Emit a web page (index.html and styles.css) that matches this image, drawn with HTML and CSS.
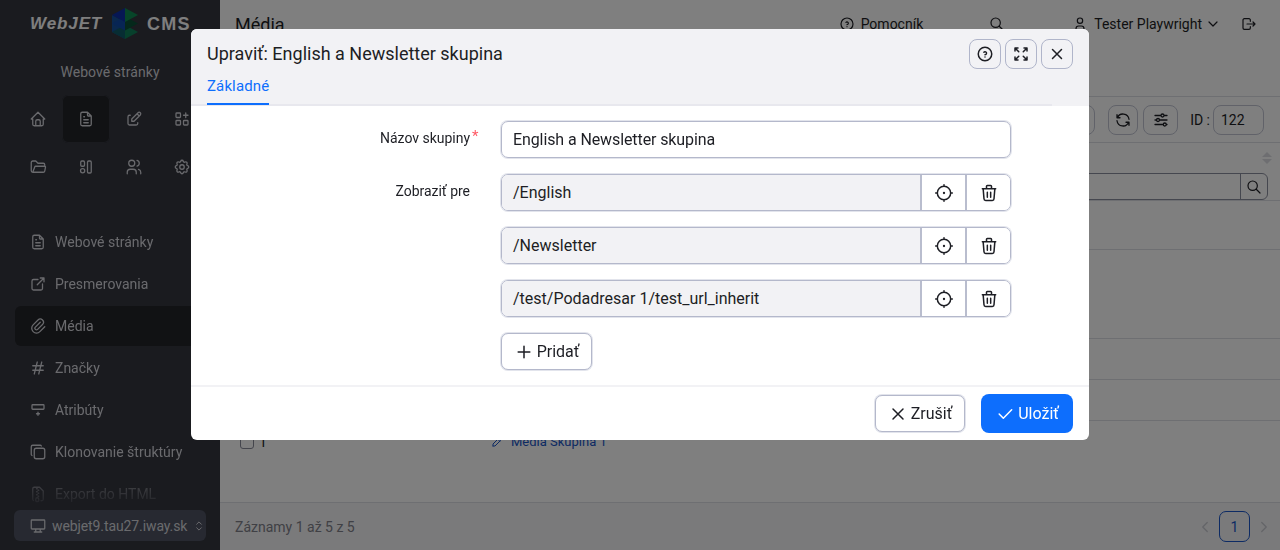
FILE: index.html
```html
<!DOCTYPE html>
<html lang="sk">
<head>
<meta charset="utf-8">
<title>Média</title>
<link rel="stylesheet" href="styles.css">
</head>
<body>
<svg class="sprite" xmlns="http://www.w3.org/2000/svg">
<symbol id="i-home" viewBox="0 0 24 24"><path d="M5 12l-2 0l9 -9l9 9l-2 0M5 12v7a2 2 0 0 0 2 2h10a2 2 0 0 0 2 -2v-7M9 21v-6a2 2 0 0 1 2 -2h2a2 2 0 0 1 2 2v6"/></symbol>
<symbol id="i-file" viewBox="0 0 24 24"><path d="M14 3v4a1 1 0 0 0 1 1h4M17 21h-10a2 2 0 0 1 -2 -2v-14a2 2 0 0 1 2 -2h7l5 5v11a2 2 0 0 1 -2 2zM9 9l1 0M9 13l6 0M9 17l6 0"/></symbol>
<symbol id="i-edit" viewBox="0 0 24 24"><path d="M7 7h-1a2 2 0 0 0 -2 2v9a2 2 0 0 0 2 2h9a2 2 0 0 0 2 -2v-1M20.385 6.585a2.1 2.1 0 0 0 -2.97 -2.97l-8.415 8.385v3h3l8.385 -8.415zM16 5l3 3"/></symbol>
<symbol id="i-apps" viewBox="0 0 24 24"><path d="M4 5a1 1 0 0 1 1 -1h4a1 1 0 0 1 1 1v4a1 1 0 0 1 -1 1h-4a1 1 0 0 1 -1 -1zM4 15a1 1 0 0 1 1 -1h4a1 1 0 0 1 1 1v4a1 1 0 0 1 -1 1h-4a1 1 0 0 1 -1 -1zM14 15a1 1 0 0 1 1 -1h4a1 1 0 0 1 1 1v4a1 1 0 0 1 -1 1h-4a1 1 0 0 1 -1 -1zM14 7l6 0M17 4l0 6"/></symbol>
<symbol id="i-folder" viewBox="0 0 24 24"><path d="M5 19l2.757 -7.351a1 1 0 0 1 .936 -.649h12.307a1 1 0 0 1 .986 1.164l-.996 5.211a2 2 0 0 1 -1.964 1.625h-14.026a2 2 0 0 1 -2 -2v-11a2 2 0 0 1 2 -2h4l3 3h7a2 2 0 0 1 2 2v2"/></symbol>
<symbol id="i-layout" viewBox="0 0 24 24"><rect x="5" y="4" width="5" height="7" rx="1.5"/><circle cx="7.500" cy="17" r="2.800"/><rect x="14" y="4" width="5" height="16" rx="1.5"/></symbol>
<symbol id="i-users" viewBox="0 0 24 24"><path d="M5 7a4 4 0 1 0 8 0a4 4 0 1 0 -8 0M3 21v-2a4 4 0 0 1 4 -4h4a4 4 0 0 1 4 4v2M16 3.13a4 4 0 0 1 0 7.75M21 21v-2a4 4 0 0 0 -3 -3.85"/></symbol>
<symbol id="i-settings" viewBox="0 0 24 24"><path d="M10.325 4.317c.426 -1.756 2.924 -1.756 3.35 0a1.724 1.724 0 0 0 2.573 1.066c1.543 -.94 3.31 .826 2.37 2.37a1.724 1.724 0 0 0 1.065 2.572c1.756 .426 1.756 2.924 0 3.35a1.724 1.724 0 0 0 -1.066 2.573c.94 1.543 -.826 3.31 -2.37 2.37a1.724 1.724 0 0 0 -2.572 1.065c-.426 1.756 -2.924 1.756 -3.35 0a1.724 1.724 0 0 0 -2.573 -1.066c-1.543 .94 -3.31 -.826 -2.37 -2.37a1.724 1.724 0 0 0 -1.065 -2.572c-1.756 -.426 -1.756 -2.924 0 -3.35a1.724 1.724 0 0 0 1.066 -2.573c-.94 -1.543 .826 -3.31 2.37 -2.37c1 .608 2.296 .07 2.572 -1.065zM9 12a3 3 0 1 0 6 0a3 3 0 0 0 -6 0"/></symbol>
<symbol id="i-external" viewBox="0 0 24 24"><path d="M12 6h-6a2 2 0 0 0 -2 2v10a2 2 0 0 0 2 2h10a2 2 0 0 0 2 -2v-6M11 13l9 -9M15 4h5v5"/></symbol>
<symbol id="i-clip" viewBox="0 0 24 24"><path d="M15 7l-6.5 6.5a1.5 1.5 0 0 0 3 3l6.5 -6.5a3 3 0 0 0 -6 -6l-6.5 6.5a4.5 4.5 0 0 0 9 9l6.5 -6.5"/></symbol>
<symbol id="i-hash" viewBox="0 0 24 24"><path d="M5 9l14 0M5 15l14 0M11 4l-4 16M17 4l-4 16"/></symbol>
<symbol id="i-row" viewBox="0 0 24 24"><path d="M20 6v4a1 1 0 0 1 -1 1h-14a1 1 0 0 1 -1 -1v-4a1 1 0 0 1 1 -1h14a1 1 0 0 1 1 1zM12 15l0 4M14 17l-4 0"/></symbol>
<symbol id="i-copy" viewBox="0 0 24 24"><path d="M7 9.667a2.667 2.667 0 0 1 2.667 -2.667h8.666a2.667 2.667 0 0 1 2.667 2.667v8.666a2.667 2.667 0 0 1 -2.667 2.667h-8.666a2.667 2.667 0 0 1 -2.667 -2.667zM4.012 16.737a2.005 2.005 0 0 1 -1.012 -1.737v-10c0 -1.1 .9 -2 2 -2h10c.75 0 1.158 .385 1.5 1"/></symbol>
<symbol id="i-zip" viewBox="0 0 24 24"><path d="M6 20.735a2 2 0 0 1 -1 -1.735v-14a2 2 0 0 1 2 -2h7l5 5v11a2 2 0 0 1 -2 2h-1M11 17a2 2 0 0 1 2 2v2a1 1 0 0 1 -1 1h-2a1 1 0 0 1 -1 -1v-2a2 2 0 0 1 2 -2zM11 5l-1 0M13 7l-1 0M11 9l-1 0M13 11l-1 0M11 13l-1 0M13 15l-1 0"/></symbol>
<symbol id="i-desktop" viewBox="0 0 24 24"><path d="M3 5a1 1 0 0 1 1 -1h16a1 1 0 0 1 1 1v10a1 1 0 0 1 -1 1h-16a1 1 0 0 1 -1 -1v-10zM7 20h10M9 16v4M15 16v4"/></symbol>
<symbol id="i-selector" viewBox="0 0 24 24"><path d="M8 9l4 -4l4 4M16 15l-4 4l-4 -4"/></symbol>
<symbol id="i-help" viewBox="0 0 24 24"><path d="M3 12a9 9 0 1 0 18 0a9 9 0 1 0 -18 0M12 16v.01M12 13a2 2 0 0 0 .914 -3.782a1.98 1.98 0 0 0 -2.414 .483"/></symbol>
<symbol id="i-search" viewBox="0 0 24 24"><path d="M3 10a7 7 0 1 0 14 0a7 7 0 1 0 -14 0M21 21l-6 -6"/></symbol>
<symbol id="i-user" viewBox="0 0 24 24"><path d="M8 7a4 4 0 1 0 8 0a4 4 0 0 0 -8 0M6 21v-2a4 4 0 0 1 4 -4h4a4 4 0 0 1 4 4v2"/></symbol>
<symbol id="i-down" viewBox="0 0 24 24"><path d="M6 9l6 6l6 -6"/></symbol>
<symbol id="i-left" viewBox="0 0 24 24"><path d="M15 6l-6 6l6 6"/></symbol>
<symbol id="i-right" viewBox="0 0 24 24"><path d="M9 6l6 6l-6 6"/></symbol>
<symbol id="i-logout" viewBox="0 0 24 24"><path d="M14 8v-2a2 2 0 0 0 -2 -2h-7a2 2 0 0 0 -2 2v12a2 2 0 0 0 2 2h7a2 2 0 0 0 2 -2v-2M9 12h12l-3 -3M18 15l3 -3"/></symbol>
<symbol id="i-max" viewBox="0 0 24 24"><path d="M16 4l4 0l0 4M15 9l5 -5M8 20l-4 0l0 -4M4 20l5 -5M16 20l4 0l0 -4M15 15l5 5M8 4l-4 0l0 4M4 4l5 5"/></symbol>
<symbol id="i-x" viewBox="0 0 24 24"><path d="M18 6l-12 12M6 6l12 12"/></symbol>
<symbol id="i-target" viewBox="0 0 24 24"><path d="M11.5 12a.5 .5 0 1 0 1 0a.5 .5 0 1 0 -1 0M4 12a8 8 0 1 0 16 0a8 8 0 1 0 -16 0M12 2l0 2M12 20l0 2M20 12l2 0M2 12l2 0"/></symbol>
<symbol id="i-trash" viewBox="0 0 24 24"><path d="M4 7l16 0M10 11l0 6M14 11l0 6M5 7l1 12a2 2 0 0 0 2 2h8a2 2 0 0 0 2 -2l1 -12M9 7v-3a1 1 0 0 1 1 -1h4a1 1 0 0 1 1 1v3"/></symbol>
<symbol id="i-plus" viewBox="0 0 24 24"><path d="M12 5l0 14M5 12l14 0"/></symbol>
<symbol id="i-check" viewBox="0 0 24 24"><path d="M5 12l5 5l10 -10"/></symbol>
<symbol id="i-refresh" viewBox="0 0 24 24"><path d="M20 11a8.1 8.1 0 0 0 -15.5 -2m-.5 -4v4h4M4 13a8.1 8.1 0 0 0 15.5 2m.5 4v-4h-4"/></symbol>
<symbol id="i-adjust" viewBox="0 0 24 24"><path d="M12 6a2 2 0 1 0 4 0a2 2 0 1 0 -4 0M4 6l8 0M16 6l4 0M6 12a2 2 0 1 0 4 0a2 2 0 1 0 -4 0M4 12l2 0M10 12l10 0M15 18a2 2 0 1 0 4 0a2 2 0 1 0 -4 0M4 18l11 0M19 18l1 0"/></symbol>
<symbol id="i-pencil" viewBox="0 0 24 24"><path d="M4 20h4l10.5 -10.5a2.828 2.828 0 1 0 -4 -4l-10.5 10.5v4M13.5 6.5l4 4"/></symbol>
</svg>

<div class="app">
  <aside class="sidebar">
    <div class="logo">
      <span class="logo-web">WebJET</span>
      <svg class="logo-mark" viewBox="0 0 28 32">
        <polygon class="m-col" points="1,7 14,14 14,31 1,24"/>
        <polygon class="m-bl" points="1,24 14,17 14,31"/>
        <polygon class="m-br" points="27,24 14,17 14,31"/>
        <polygon class="m-ml" points="1,15.500 14,8.500 14,22.500"/>
        <polygon class="m-mr" points="27,15.500 14,8.500 14,22.500"/>
        <polygon class="m-tl" points="1,7 14,0 14,14"/>
        <polygon class="m-tr" points="27,7 14,0 14,14"/>
      </svg>
      <span class="logo-cms">CMS</span>
    </div>
    <div class="section-title">Webové stránky</div>
    <div class="module-grid">
      <a class="module"><svg class="ico"><use href="#i-home"/></svg></a>
      <a class="module module-active"><svg class="ico"><use href="#i-file"/></svg></a>
      <a class="module"><svg class="ico"><use href="#i-edit"/></svg></a>
      <a class="module"><svg class="ico"><use href="#i-apps"/></svg></a>
      <a class="module"><svg class="ico"><use href="#i-folder"/></svg></a>
      <a class="module"><svg class="ico"><use href="#i-layout"/></svg></a>
      <a class="module"><svg class="ico"><use href="#i-users"/></svg></a>
      <a class="module"><svg class="ico"><use href="#i-settings"/></svg></a>
    </div>
    <nav class="nav">
      <a class="nav-item"><svg class="ico"><use href="#i-file"/></svg>Webové stránky</a>
      <a class="nav-item"><svg class="ico"><use href="#i-external"/></svg>Presmerovania</a>
      <a class="nav-item nav-active"><svg class="ico"><use href="#i-clip"/></svg>Média</a>
      <a class="nav-item"><svg class="ico"><use href="#i-hash"/></svg>Značky</a>
      <a class="nav-item"><svg class="ico"><use href="#i-row"/></svg>Atribúty</a>
      <a class="nav-item"><svg class="ico"><use href="#i-copy"/></svg>Klonovanie štruktúry</a>
      <a class="nav-item"><svg class="ico"><use href="#i-zip"/></svg>Export do HTML</a>
    </nav>
    <div class="site-select">
      <svg class="ico"><use href="#i-desktop"/></svg>
      <span class="site-name">webjet9.tau27.iway.sk</span>
      <svg class="ico-sm"><use href="#i-selector"/></svg>
    </div>
  </aside>

  <main class="main">
    <header class="topbar">
      <h1 class="page-title">Média</h1>
      <a class="top-link top-help"><svg class="ico-top"><use href="#i-help"/></svg>Pomocník</a>
      <a class="top-link top-search"><svg class="ico-top"><use href="#i-search"/></svg></a>
      <a class="top-link top-user"><svg class="ico-top"><use href="#i-user"/></svg>Tester Playwright<svg class="ico-top top-caret"><use href="#i-down"/></svg></a>
      <a class="top-link top-out"><svg class="ico-top"><use href="#i-logout"/></svg></a>
    </header>
    <div class="toolbar">
      <span class="tool-btn tool-wide"></span>
      <span class="tool-btn tool-refresh"><svg class="ico"><use href="#i-refresh"/></svg></span>
      <span class="tool-btn tool-adjust"><svg class="ico"><use href="#i-adjust"/></svg></span>
      <label class="id-label">ID :</label>
      <span class="id-input">122</span>
    </div>
    <div class="thead">
      <div class="sort"><span class="sort-up"></span><span class="sort-down"></span></div>
      <div class="filter"><span class="filter-btn"><svg class="ico-top"><use href="#i-search"/></svg></span></div>
    </div>
    <div class="row row-a"></div>
    <div class="row row-b"></div>
    <div class="row row-c"></div>
    <div class="row row-c"></div>
    <div class="row row-last">
      <span class="cell-check"><span class="checkbox"></span>1</span>
      <a class="cell-link"><svg class="ico-link"><use href="#i-pencil"/></svg>Média Skupina 1</a>
    </div>
    <footer class="pager-bar">
      <span class="records">Záznamy 1 až 5 z 5</span>
      <svg class="ico pager-arrow"><use href="#i-left"/></svg>
      <span class="page-num">1</span>
      <svg class="ico pager-arrow"><use href="#i-right"/></svg>
    </footer>
  </main>
</div>

<div class="backdrop"></div>

<section class="modal">
  <div class="modal-head">
    <div class="modal-title-row">
      <h2 class="modal-title">Upraviť: English a Newsletter skupina</h2>
      <div class="head-btns">
        <button class="head-btn"><svg class="ico"><use href="#i-help"/></svg></button>
        <button class="head-btn"><svg class="ico"><use href="#i-max"/></svg></button>
        <button class="head-btn"><svg class="ico"><use href="#i-x"/></svg></button>
      </div>
    </div>
    <div class="tabs"><a class="tab">Základné</a></div>
  </div>
  <div class="modal-body">
    <div class="form-row">
      <label class="form-label">Názov skupiny<span class="req">*</span></label>
      <div class="field field-text">English a Newsletter skupina</div>
    </div>
    <div class="form-row">
      <label class="form-label">Zobraziť pre</label>
      <div class="group">
        <span class="group-val">/English</span>
        <button class="group-btn"><svg class="ico-lg"><use href="#i-target"/></svg></button>
        <button class="group-btn"><svg class="ico-lg"><use href="#i-trash"/></svg></button>
      </div>
    </div>
    <div class="form-row">
      <span class="form-label"></span>
      <div class="group">
        <span class="group-val">/Newsletter</span>
        <button class="group-btn"><svg class="ico-lg"><use href="#i-target"/></svg></button>
        <button class="group-btn"><svg class="ico-lg"><use href="#i-trash"/></svg></button>
      </div>
    </div>
    <div class="form-row">
      <span class="form-label"></span>
      <div class="group">
        <span class="group-val">/test/Podadresar 1/test_url_inherit</span>
        <button class="group-btn"><svg class="ico-lg"><use href="#i-target"/></svg></button>
        <button class="group-btn"><svg class="ico-lg"><use href="#i-trash"/></svg></button>
      </div>
    </div>
    <div class="form-row">
      <span class="form-label"></span>
      <button class="btn btn-add"><svg class="ico-lg"><use href="#i-plus"/></svg>Pridať</button>
    </div>
  </div>
  <div class="modal-foot">
    <button class="btn btn-cancel"><svg class="ico-lg"><use href="#i-x"/></svg>Zrušiť</button>
    <button class="btn btn-save"><svg class="ico-lg"><use href="#i-check"/></svg>Uložiť</button>
  </div>
</section>
</body>
</html>
```

FILE: styles.css
```css
* { box-sizing: border-box; }
html, body { margin: 0; height: 550px; overflow: hidden; }
body { font-family: Roboto, "Noto Sans", sans-serif; font-size: 14px; color: #1d1e24; background: #fff; }
.sprite { display: none; }
svg { fill: none; stroke: currentColor; stroke-width: 2; stroke-linecap: round; stroke-linejoin: round; flex: none; }
.ico { width: 18px; height: 18px; stroke-width: 1.7; }
.ico-lg { width: 20px; height: 20px; stroke-width: 1.8; }
.ico-sm { width: 14px; height: 14px; stroke-width: 1.7; }
.ico-top { width: 16px; height: 16px; stroke-width: 1.8; }
.ico-link { width: 12px; height: 12px; }

.app { display: flex; width: 1280px; height: 550px; }

/* sidebar */
.sidebar { width: 220px; flex: none; display: flex; flex-direction: column; background: #34363f; color: #d4d5db; overflow: hidden; }
.logo { height: 48px; display: flex; align-items: center; padding-left: 30px; color: #fdfdfd; }
.logo-web { width: 81px; font: italic 700 17px "Liberation Sans", sans-serif; letter-spacing: .9px; }
.logo-cms { margin-left: 8px; font: 700 18px "Liberation Sans", sans-serif; letter-spacing: 1.2px; }
.logo-mark { width: 28px; height: 32px; stroke: none; }
.m-col { fill: #14509c; }
.m-tl { fill: #0c2fa8; } .m-tr { fill: #0f8a52; }
.m-ml { fill: #0f4aa8; } .m-mr { fill: #0a5036; }
.m-bl { fill: #0f5a66; } .m-br { fill: #0f8058; }
.section-title { margin-top: 12px; height: 24px; line-height: 24px; text-align: center; font-size: 14px; letter-spacing: .06px; }
.module-grid { display: grid; grid-template-columns: repeat(4, 48px); grid-auto-rows: 48px; margin: 11px 0 0 14px; }
.module { display: flex; align-items: center; justify-content: center; border-radius: 6px; }
.module-active { background: #232428; box-shadow: inset 0 0 0 1px #34363f; }
.nav { flex: 1; min-height: 0; margin: 31px 0 0 15px; display: flex; flex-direction: column; gap: 2px; overflow: hidden;
  -webkit-mask-image: linear-gradient(#000 82%, rgba(0,0,0,.15) 97%); mask-image: linear-gradient(#000 82%, rgba(0,0,0,.15) 97%); }
.nav-item { flex: none; height: 40px; display: flex; align-items: center; gap: 8px; padding-left: 14px; border-radius: 6px; }
.nav-active { background: #232428; }
.site-select { flex: none; height: 31px; margin: 0 14px 9px; padding: 0 2px 0 15px; display: flex; align-items: center; gap: 5px; background: #4e5262; border-radius: 6px; }
.site-name { flex: 1; white-space: nowrap; letter-spacing: -.1px; }

/* main */
.main { flex: 1; min-width: 0; display: flex; flex-direction: column; background: #fff; }
.topbar { height: 48px; flex: none; display: flex; align-items: center; padding: 0 23px 0 15px; }
.page-title { margin: 0; font-size: 18px; font-weight: 400; flex: 1; }
.top-link { display: flex; align-items: center; gap: 6px; }
.top-search { margin-left: 66px; }
.top-user { margin-left: 67px; }
.top-caret { margin-left: -3px; }
.top-out { margin-left: 20px; }
.toolbar { margin-top: 48px; height: 47px; flex: none; display: flex; align-items: center; border-top: 1px solid #dddee5; border-bottom: 1px solid #dddee5; padding: 0 16px 0 0; justify-content: flex-end; }
.tool-btn { height: 30px; display: flex; align-items: center; justify-content: center; border: 1px solid #c2c5d3; border-radius: 8px; }
.tool-wide { width: 60px; margin-right: 13px; }
.tool-refresh { width: 30px; margin-right: 5px; }
.tool-adjust { width: 35px; }
.id-label { margin: 0 3px 0 12px; }
.id-input { width: 51px; height: 30px; line-height: 28px; padding-left: 7px; border: 1px solid #c2c5d3; border-radius: 8px; }
.thead { height: 58px; flex: none; border-bottom: 1px solid #dddee5; display: flex; flex-direction: column; align-items: flex-end; padding: 9px 12px 0 0; }
.sort { display: flex; flex-direction: column; gap: 2px; margin-right: -4px; }
.sort-up { border: 5px solid transparent; border-top: 0; border-bottom: 5px solid #dcdde2; }
.sort-down { border: 5px solid transparent; border-bottom: 0; border-top: 5px solid #dcdde2; }
.filter { width: 400px; height: 28px; margin-top: 9px; display: flex; justify-content: flex-end; border: 1px solid #8b8e9e; border-radius: 6px; }
.filter-btn { width: 27px; display: flex; align-items: center; justify-content: center; border-left: 1px solid #8b8e9e; }
.row { flex: none; border-bottom: 1px solid #dddee5; }
.row-a { height: 49px; }
.row-b { height: 89px; }
.row-c { height: 41px; }
.row-last { height: 41px; border-bottom: 0; display: flex; align-items: center; padding-left: 20px; }
.cell-check { width: 251px; display: flex; align-items: center; gap: 5px; }
.checkbox { width: 14px; height: 14px; border: 1px solid #888a99; border-radius: 3px; }
.cell-link { display: flex; align-items: center; gap: 8px; color: #1a56c8; font-size: 13px; }
.pager-bar { margin-top: auto; height: 48px; flex: none; display: flex; align-items: center; padding: 0 7px 0 15px; background: #f4f4f6; border-top: 1px solid #dddee5; }
.records { flex: 1; color: #80818a; }
.pager-arrow { color: #c8c9d0; }
.page-num { width: 31px; height: 31px; margin: 0 5px; display: flex; align-items: center; justify-content: center; color: #1a56c8; border: 1px solid #1a56c8; border-radius: 7px; }

/* overlay */
.backdrop { position: fixed; inset: 0; background: rgba(0,0,0,.5); }
.modal { position: fixed; left: 191px; top: 29px; width: 898px; height: 411px; display: flex; flex-direction: column; background: #fff; border-radius: 6px; overflow: hidden; }
.modal-head { height: 77px; flex: none; background: #f2f2f5; padding: 0 16px; position: relative; }
.modal-head::after { content: ""; position: absolute; left: 0; bottom: 0; width: 861px; height: 2px; background: #e8e8ee; }
.modal-title-row { height: 46px; display: flex; align-items: center; justify-content: space-between; padding-top: 2px; }
.modal-title { margin: 0; font-size: 18px; font-weight: 400; }
.head-btns { display: flex; gap: 4px; margin-top: 2px; }
.head-btn { width: 32px; height: 30px; padding: 0; display: flex; align-items: center; justify-content: center; color: #1d1e24; background: #f2f2f5; border: 1px solid #b0b5ca; border-radius: 8px; }
.head-btn .ico { stroke-width: 2; }
.tabs { display: flex; }
.tab { position: relative; z-index: 1; height: 30px; line-height: 22px; color: #0d6efd; font-size: 15px; letter-spacing: .12px; border-bottom: 2px solid #0d6efd; }
.modal-body { flex: 1; padding-top: 14px; display: flex; flex-direction: column; gap: 14px; }
.form-row { display: flex; align-items: flex-start; height: 39px; }
.form-label { width: 279px; flex: none; margin-right: 30px; line-height: 37px; text-align: right; position: relative; letter-spacing: -.02px; }
.req { position: absolute; left: 281px; top: -2px; color: #ff5a66; font-size: 15px; }
.field, .group, .btn { margin: 1px; box-shadow: 0 0 0 1px #e2e4ec; border: 1px solid #b4b8cb; border-radius: 7px; }
.field { width: 510px; height: 37px; line-height: 35px; padding-left: 11px; font-size: 16px; letter-spacing: -.1px; }
.group { width: 510px; height: 37px; display: flex; overflow: hidden; }
.group-val { flex: 1; line-height: 35px; padding-left: 11px; font-size: 16px; background: #f2f2f5; }
.group-btn { width: 45px; padding: 0; display: flex; align-items: center; justify-content: center; color: #1d1e24; background: #fff; border: 0; border-left: 2px solid #b9bdce; }
.btn { height: 37px; display: flex; align-items: center; justify-content: center; gap: 3px; padding: 0; font: inherit; font-size: 16px; color: #1d1e24; background: #fff; }
.btn-add { width: 91px; }
.modal-foot { height: 55px; flex: none; display: flex; justify-content: flex-end; gap: 15px; padding: 7px 16px 0 0; border-top: 2px solid #f2f2f5; }
.btn-cancel { width: 90px; }
.btn-save { width: 90px; color: #fff; background: #0d6efd; border-color: #0d6efd; box-shadow: 0 0 0 1px #0d6efd; }
```
